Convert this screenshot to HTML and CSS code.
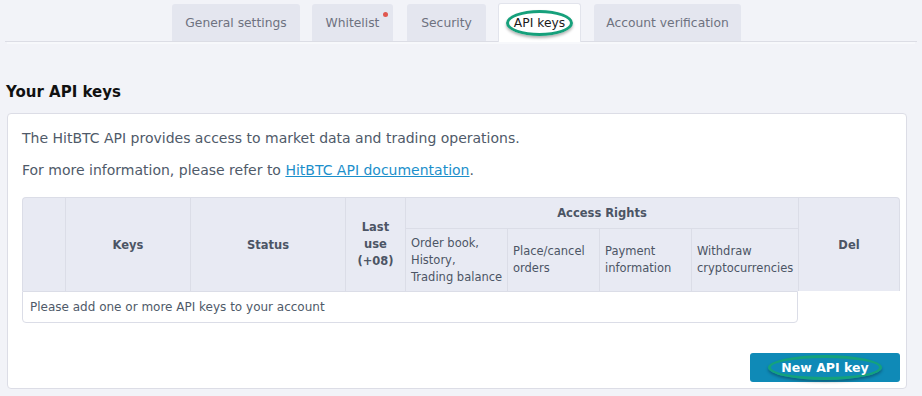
FILE: index.html
```html
<!DOCTYPE html>
<html>
<head>
<meta charset="utf-8">
<link rel="stylesheet" href="styles.css">
</head>
<body>
<div class="tabbar">
  <div class="tab">General settings</div>
  <div class="tab tab-dot">Whitelist<span class="dot"></span></div>
  <div class="tab">Security</div>
  <div class="tab active"><span class="ring">API keys</span></div>
  <div class="tab">Account verification</div>
</div>
<h2 class="title">Your API keys</h2>
<div class="card">
  <p class="para">The HitBTC API provides access to market data and trading operations.</p>
  <p class="para">For more information, please refer to <a class="link" href="#">HitBTC API documentation</a>.</p>
  <table class="keys">
    <thead>
      <tr>
        <th rowspan="2" class="c0"></th>
        <th rowspan="2" class="c1">Keys</th>
        <th rowspan="2" class="c2">Status</th>
        <th rowspan="2" class="c3">Last<br>use<br>(+08)</th>
        <th colspan="4" class="grp">Access Rights</th>
        <th rowspan="2" class="c8 del">Del</th>
      </tr>
      <tr class="sub">
        <th class="c4">Order book,<br>History,<br>Trading balance</th>
        <th class="c5">Place/cancel<br>orders</th>
        <th class="c6">Payment<br>information</th>
        <th class="c7">Withdraw<br>cryptocurrencies</th>
      </tr>
    </thead>
    <tbody>
      <tr>
        <td colspan="8" class="empty">Please add one or more API keys to your account</td>
      </tr>
    </tbody>
  </table>
  <div class="actions">
    <button class="btn"><span class="ring ring-btn">New API key</span></button>
  </div>
</div>
</body>
</html>
```
FILE: styles.css
```css
html, body {
  margin: 0;
  padding: 0;
  background: #f2f3f8;
  font-family: "DejaVu Sans", Verdana, sans-serif;
}
.tabbar {
  display: flex;
  align-items: flex-end;
  gap: 12px;
  height: 41px;
  padding-left: 172px;
  margin: 0 5px;
  border-bottom: 1px solid #dcdde5;
  box-shadow: 0 4px 0 -2px #f7f8fb;
}
.tab {
  position: relative;
  height: 37px;
  box-sizing: border-box;
  display: flex;
  align-items: center;
  justify-content: center;
  background: #e4e6ef;
  color: #6e7280;
  font-size: 12.3px;
  border-radius: 3px 3px 0 0;
}
.tab:nth-child(1) { width: 128px; margin-left: -5px; }
.tab:nth-child(2) { width: 81px; }
.tab:nth-child(3) { width: 79px; margin-left: 2px; }
.tab:nth-child(4) { width: 83px; }
.tab:nth-child(5) { width: 147px; margin-left: 1px; }
.tab.active {
  background: #ffffff;
  height: 39px;
  margin-bottom: -1px;
  border: 1px solid #e2e4ec;
  border-bottom: none;
  color: #1b1b1b;
}
.dot {
  position: absolute;
  top: 8px;
  right: 5px;
  width: 5px;
  height: 5px;
  border-radius: 50%;
  background: #e0574f;
}
.ring {
  display: inline-block;
  padding: 3px 5px;
  border: 3px solid #16a07b;
  border-radius: 50%;
  box-shadow: 0 2px 3px rgba(0,0,0,0.3);
}
.title {
  margin: 41px 0 0 6px;
  font-size: 15px;
  font-weight: bold;
  color: #111;
  height: 30px;
}
.card {
  margin: 0 15px 0 7px;
  background: #fff;
  border: 1px solid #dcdde6;
  border-radius: 4px;
  padding: 15px 6px 7px 14px;
  height: 276px;
  box-sizing: border-box;
}
.para {
  margin: 0 0 13px 0;
  font-size: 14px;
  color: #4f5a69;
  line-height: 19px;
}
.link {
  color: #1c8fcb;
  text-decoration: underline;
}
.keys {
  margin-top: 17px;
  border-collapse: separate;
  border-spacing: 0;
  font-size: 11.5px;
  color: #4c5565;
}
.keys th {
  background: #e8eaf3;
  border-left: 1px solid #dbdde7;
  border-top: 1px solid #dbdde7;
  font-weight: bold;
  padding: 0;
}
.keys th.c0 { border-top-left-radius: 4px; }
.keys th.del { border-right: 1px solid #dbdde7; border-top-right-radius: 4px; }
.keys .sub th {
  font-weight: normal;
  text-align: left;
  padding: 0 4px 0 5px;
  line-height: 17px;
  height: 62px;
  white-space: nowrap;
}
.keys th.grp { height: 30px; }
.c0 { width: 42px; }
.c1 { width: 124px; }
.c2 { width: 154px; }
.c3 { width: 59px; line-height: 17px; }
.keys .sub th.c4 { width: 92px; }
.keys .sub th.c5 { width: 82px; }
.keys .sub th.c6 { width: 82px; }
.keys .sub th.c7 { width: 97px; }
.c8 { width: 100px; }
.keys td.empty {
  border: 1px solid #dbdde7;
  border-bottom-left-radius: 4px;
  border-bottom-right-radius: 4px;
  height: 30px;
  padding: 0 7px;
  font-size: 12px;
  color: #4f5a69;
}
.actions {
  display: flex;
  justify-content: flex-end;
  margin-top: 30px;
}
.btn {
  width: 150px;
  height: 29px;
  background: #0f8ab7;
  border: none;
  border-radius: 3px;
  color: #fff;
  font-family: "DejaVu Sans", Verdana, sans-serif;
  font-weight: bold;
  font-size: 12.5px;
  padding: 0;
  display: flex;
  align-items: center;
  justify-content: center;
}
.ring-btn {
  padding: 2px 10px;
  border-color: #14a27c;
}
```
